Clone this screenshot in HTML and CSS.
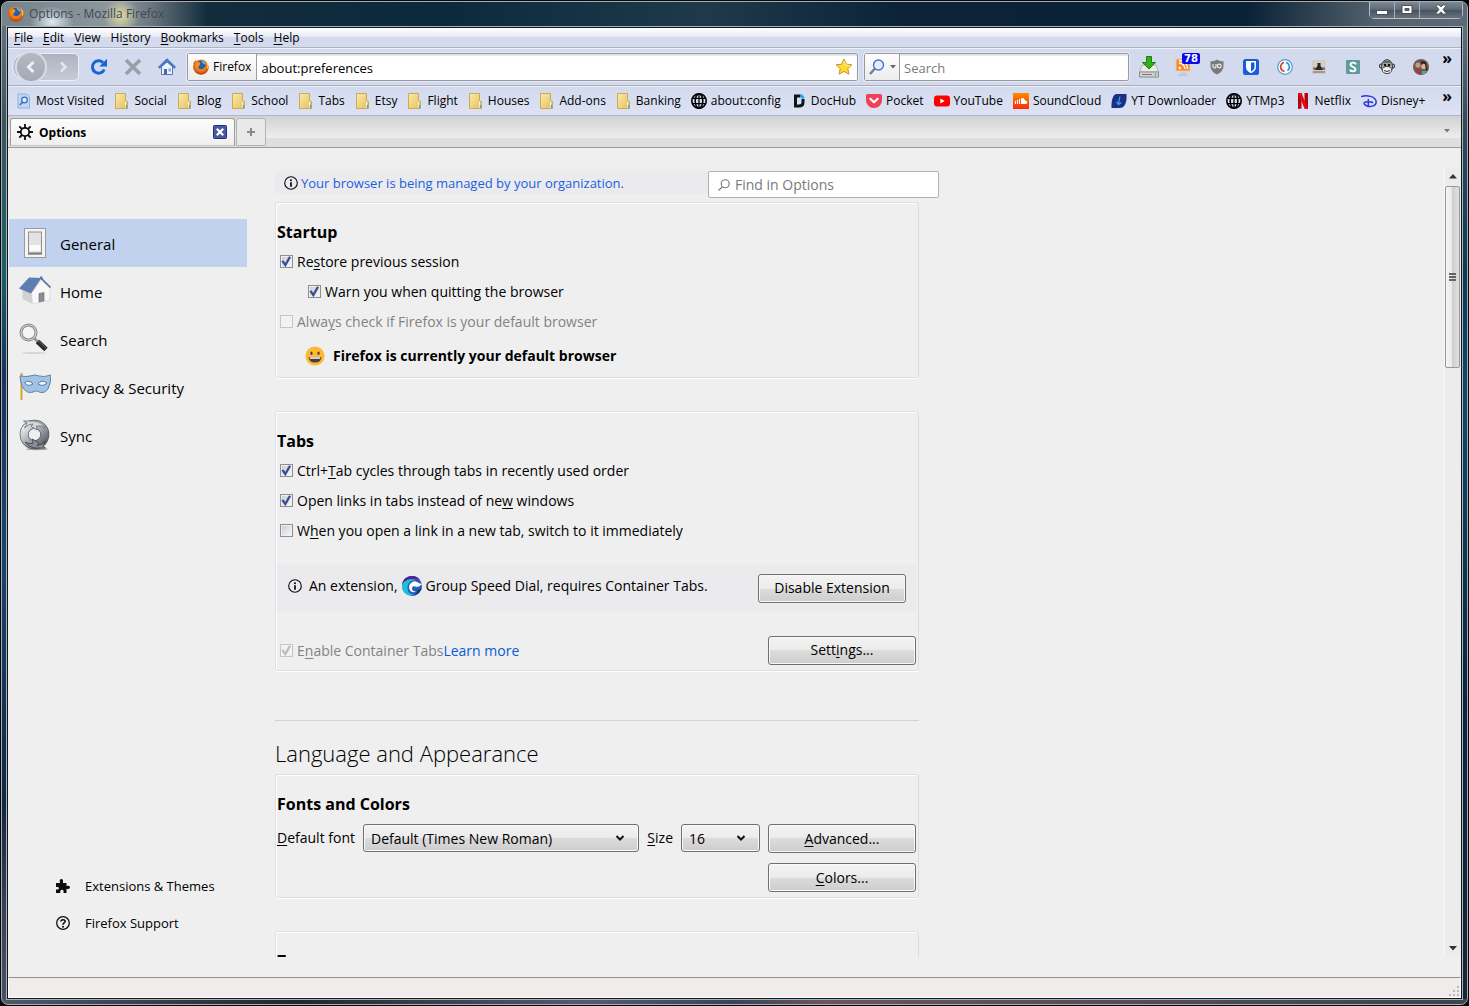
FILE: index.html
```html
<!DOCTYPE html>
<html lang="en">
<head>
<meta charset="utf-8">
<title>Options - Mozilla Firefox</title>
<link rel="stylesheet" href="styles.css">
</head>
<body>
<svg class="defs" aria-hidden="true">
  <defs>
    <linearGradient id="gold" x1="0" y1="0" x2="1" y2="1"><stop offset="0" stop-color="#fdeaa4"/><stop offset="1" stop-color="#e3bf62"/></linearGradient>
    <linearGradient id="steel" x1="0" y1="0" x2="1" y2="1"><stop offset="0" stop-color="#f2f4f5"/><stop offset=".5" stop-color="#a4aaaf"/><stop offset="1" stop-color="#565c61"/></linearGradient>
    <linearGradient id="sound" x1="0" y1="0" x2="0" y2="1"><stop offset="0" stop-color="#ff8a00"/><stop offset="1" stop-color="#fb2a05"/></linearGradient>
    <radialGradient id="fox" cx=".5" cy=".35" r=".65"><stop offset="0" stop-color="#ffb52e"/><stop offset=".6" stop-color="#ee7a16"/><stop offset="1" stop-color="#b93c0c"/></radialGradient>
    <symbol id="firefox" viewBox="0 0 16 16">
      <circle cx="8" cy="8" r="7.6" fill="url(#fox)"/>
      <circle cx="8" cy="6.8" r="5.3" fill="#2b5ca8"/>
      <path d="M8 1.600c2.600.3 4.600 2 5.200 4.200L10.500 5z" fill="#69b4e8"/>
      <path d="M.5 3.500C1.500 2.800 2 2 2.300 1c.6 1.200 1.500 1.800 3 2 1 .1 1.800.9 2.200 1.900L6.200 6c.2 1.200-.3 1.700-1.200 2 .6 2.300 3 2.700 5 1.700 2-1 3.300-3 2.700-6.200C15 5.200 16 8 15.200 10.600 14 14 11 15.800 7.500 15.600 3.500 15.300.3 12 .3 8z" fill="url(#fox)"/>
      <path d="M13.500 3.500c1.500 1.800 1.700 4 .8 6" stroke="#ffdc4a" stroke-width="1" fill="none"/>
    </symbol>
    <symbol id="folder" viewBox="0 0 16 16">
      <path d="M1.500.5h10v7.500l2 .5v7H1.500z" fill="url(#gold)" stroke="#c79c3f" stroke-width=".8"/>
      <path d="M11.500 8.500v6.500" stroke="#fff3bf"/><path d="M12.500 12v3" stroke="#39a8dc" stroke-width="1.300"/>
    </symbol>
    <symbol id="globe" viewBox="0 0 16 16">
      <g fill="none" stroke="#000" stroke-width="1.600"><circle cx="8" cy="8" r="7.200"/><ellipse cx="8" cy="8" rx="3.800" ry="7.200"/><path d="M1.500 5.300h13M1.500 10.700h13M8 1v14" stroke-width="1.300"/></g>
    </symbol>
    <symbol id="info" viewBox="0 0 16 16">
      <circle cx="8" cy="8" r="7.200" fill="none" stroke="#0c0c0d" stroke-width="1.300"/><circle cx="8" cy="4.800" r="1.200" fill="#0c0c0d"/><path d="M8 7v5.300" stroke="#0c0c0d" stroke-width="2"/>
    </symbol>
    <symbol id="chevron" viewBox="0 0 10 8"><path d="M1.500 2l3.500 3.500L8.500 2" fill="none" stroke="#111" stroke-width="2"/></symbol>
  </defs>
</svg>

<div class="window">
  <header class="titlebar">
    <svg class="i16"><use href="#firefox"/></svg>
    <span class="caption">Options - Mozilla Firefox</span>
    <div class="winctl">
      <button aria-label="Minimize"><svg width="12" height="12"><rect x=".5" y="6.500" width="11" height="4" fill="#fff" stroke="#4a5058"/></svg></button>
      <button aria-label="Maximize"><svg width="12" height="12"><path d="M1 1.500h10v8H1zM4 4.500v2h4v-2z" fill="#fff" fill-rule="evenodd" stroke="#4a5058"/></svg></button>
      <button class="close" aria-label="Close"><svg width="12" height="12"><path d="M.5 1h3.500l2 2 2-2h3.500L8 5.500l3.500 4.500H8L6 7.800 4 10H.5L4 5.500z" fill="#fff" stroke="#4a5058" stroke-width=".8"/></svg></button>
    </div>
  </header>

  <div class="client">
    <nav class="menubar">
      <a href="#"><u>F</u>ile</a><a href="#"><u>E</u>dit</a><a href="#"><u>V</u>iew</a><a href="#">Hi<u>s</u>tory</a><a href="#"><u>B</u>ookmarks</a><a href="#"><u>T</u>ools</a><a href="#"><u>H</u>elp</a>
    </nav>

    <div class="navbar">
      <div class="backfwd">
        <button class="back" aria-label="Back"><svg width="16" height="16"><path d="M10.500 3L5.500 8l5 5" fill="none" stroke="#eef0f5" stroke-width="3"/></svg></button>
        <button class="fwd" aria-label="Forward"><svg width="14" height="14"><path d="M5 2.500L9.500 7 5 11.500" fill="none" stroke="#e4e6ec" stroke-width="2.500"/></svg></button>
      </div>
      <button class="tool" aria-label="Reload"><svg width="18" height="18"><path d="M14.300 11.500A6.200 6.200 0 1 1 13 4.600" fill="none" stroke="#1766d8" stroke-width="3"/><path d="M17 .8v7.700H9.300z" fill="#1766d8"/></svg></button>
      <button class="tool" aria-label="Stop"><svg width="18" height="18"><path d="M2 2l14 14M16 2L2 16" stroke="#9a9ea8" stroke-width="3.600"/></svg></button>
      <button class="tool" aria-label="Home"><svg width="18" height="18"><path d="M3.500 8.500L9 4l5.500 4.500v8h-11z" fill="#eef3fb" stroke="#5377bd"/><path d="M.8 9.800L9 2l8.200 7.800" fill="none" stroke="#4a74c6" stroke-width="2.400"/><rect x="6" y="11" width="3" height="5.500" fill="#4868a8"/><rect x="10.500" y="10.500" width="2.500" height="3" fill="#7fa8df"/></svg></button>
      <div class="urlbar">
        <button class="identity"><svg class="i16"><use href="#firefox"/></svg>Firefox</button>
        <input type="text" aria-label="Address" value="about:preferences">
        <button class="star" aria-label="Bookmark this page"><svg width="18" height="18"><path d="M9 1.200l2.400 5 5.400.6-4 3.800 1.100 5.500L9 13.400l-4.900 2.700 1.100-5.500-4-3.800 5.400-.6z" fill="#ffd93b" stroke="#d0920f"/><path d="M9 3l1.600 4 4.200.5" fill="none" stroke="#fff4a8"/></svg></button>
      </div>
      <div class="searchbar">
        <button class="engine" aria-label="Search engine"><svg width="18" height="18"><path d="M2 16l5-5.500" stroke="#7c7f86" stroke-width="2.600"/><circle cx="10.500" cy="7" r="5" fill="#e4effc" stroke="#4a6fd0" stroke-width="1.400"/></svg><svg width="6" height="4"><path d="M0 0h6L3 3.500z" fill="#666"/></svg></button>
        <input type="text" aria-label="Search" placeholder="Search">
      </div>
      <div class="addons">
        <button aria-label="Downloads"><svg width="20" height="22"><path d="M3 9h14l2.500 7H.5z" fill="#e9e9e9" stroke="#b5b5b5"/><path d="M.5 16h19v5H.5z" fill="#d4d4d4" stroke="#8a8a8a"/><path d="M3 18.500h10" stroke="#777"/><circle cx="16.500" cy="18.500" r="1" fill="#4b4"/><path d="M7.500.5h5v6h4L10 13 3.500 6.500h4z" fill="#2fb11a" stroke="#1b7f0d"/></svg></button>
        <button class="feed" aria-label="Feeds"><svg width="18" height="18"><rect x="2" y="1" width="14" height="12" fill="#f68b2c" stroke="#e9c9a8"/><path d="M5 5a6 6 0 0 1 6 6M5 2.500a8 8 0 0 1 8.500 8.500" fill="none" stroke="#fff" stroke-width="1.400"/><circle cx="5.800" cy="10" r="1.200" fill="#fff"/><path d="M6 15.500h6M4 17.500h10" stroke="#bcc3cc" stroke-width="1.500"/></svg><span class="badge">78</span></button>
        <button aria-label="uBlock"><svg width="16" height="16"><path d="M8 .5c2.500 1.500 4.500 1.800 6.500 1.800v4.200c0 4.500-2.500 7-6.500 9-4-2-6.500-4.500-6.500-9V2.300C3.500 2.300 5.500 2 8 .5z" fill="#7b7b7b"/><path d="M4 5v2.500a1.500 1.500 0 0 0 3 0V5" fill="none" stroke="#eee" stroke-width="1.200"/><circle cx="10.300" cy="7" r="1.800" fill="none" stroke="#eee" stroke-width="1.200"/></svg></button>
        <button aria-label="Bitwarden"><svg width="16" height="16"><rect width="16" height="16" rx="2.500" fill="#175ddc"/><path d="M3 2h10v6c0 3-2 4.800-5 6.300C5 12.800 3 11 3 8z" fill="#fff"/><path d="M8 3.500h3.500V8c0 2-1.500 3.500-3.500 4.500z" fill="#175ddc"/></svg></button>
        <button aria-label="Sync circle"><svg width="16" height="16"><circle cx="8" cy="8" r="7.300" fill="#f3f9fc" stroke="#4aa0cf" stroke-width="1.200"/><path d="M9 3.600a4.500 4.500 0 0 1 1.500 8" fill="none" stroke="#3a93cc" stroke-width="1.600"/><path d="M7 3.600a4.500 4.500 0 0 0-1.500 8l2 .8" fill="none" stroke="#dc4032" stroke-width="1.600"/></svg></button>
        <button aria-label="Camera"><svg width="14" height="14"><rect width="14" height="14" rx="1" fill="#d3cdc5"/><path d="M5.500 3h3v3l3 4H2.500l3-4z" fill="#2a2724"/><path d="M1 8.500h3M10 8.500h3" stroke="#6a635b" stroke-width="2"/><path d="M1 12h12" stroke="#a0988e" stroke-width="2"/></svg></button>
        <button aria-label="Stylus"><svg width="14" height="14"><rect width="14" height="14" rx="1" fill="#5f9b9b"/><path d="M10 4.300C9 2 4.500 2 4.500 4.800 4.500 7 9.500 6.600 9.500 9.200 9.500 12 4.500 11.800 4 9.500" fill="none" stroke="#fff" stroke-width="1.900"/></svg></button>
        <button aria-label="Greasemonkey"><svg width="16" height="16"><circle cx="2.200" cy="7" r="2" fill="#bbb" stroke="#333"/><circle cx="13.800" cy="7" r="2" fill="#bbb" stroke="#333"/><ellipse cx="8" cy="7.500" rx="5.500" ry="6.800" fill="#aaa" stroke="#333"/><ellipse cx="8" cy="11" rx="4.800" ry="3.600" fill="#eee" stroke="#444"/><circle cx="6" cy="6" r="1.300" fill="#111"/><circle cx="10" cy="6" r="1.300" fill="#111"/><path d="M5 11.500q3 2 6 0" fill="none" stroke="#333"/><path d="M4.500 3h7" stroke="#555" stroke-width="1.500"/></svg></button>
        <button aria-label="Profile"><svg width="16" height="16"><circle cx="8" cy="8" r="8" fill="#6d5a50"/><circle cx="5" cy="6" r="2.600" fill="#c99a86"/><circle cx="10.800" cy="7.500" r="2.600" fill="#e0b09c"/><path d="M8 3q3-2 5 1l1.500 7H13l-1-6-2-1-2 2z" fill="#2a1c1a"/><path d="M2.500 12q3-4 5-1l1 4.800q-4 0-6-3.800z" fill="#a33d42"/><path d="M9 12h4.500l-1 2.500L9 15.800z" fill="#48a6a4"/></svg></button>
      </div>
      <button class="more" aria-label="More tools">»</button>
    </div>

    <div class="bookmarks">
      <a href="#"><svg class="i16"><path d="M2 1h8.500l3 3v11H2z" fill="#bcd8f4" stroke="#8db3dc"/><circle cx="8.500" cy="7" r="2.800" fill="#dcecfb" stroke="#3e6fb6" stroke-width="1.300"/><path d="M6.500 9.200L3.800 12" stroke="#3e6fb6" stroke-width="1.600"/></svg>Most Visited</a>
      <a href="#"><svg class="i16"><use href="#folder"/></svg>Social</a>
      <a href="#"><svg class="i16"><use href="#folder"/></svg>Blog</a>
      <a href="#"><svg class="i16"><use href="#folder"/></svg>School</a>
      <a href="#"><svg class="i16"><use href="#folder"/></svg>Tabs</a>
      <a href="#"><svg class="i16"><use href="#folder"/></svg>Etsy</a>
      <a href="#"><svg class="i16"><use href="#folder"/></svg>Flight</a>
      <a href="#"><svg class="i16"><use href="#folder"/></svg>Houses</a>
      <a href="#"><svg class="i16"><use href="#folder"/></svg>Add-ons</a>
      <a href="#"><svg class="i16"><use href="#folder"/></svg>Banking</a>
      <a href="#"><svg class="i16"><use href="#globe"/></svg>about:config</a>
      <a href="#"><svg class="i16"><path d="M9 3H4.500v10H8c2.800 0 4-1.600 4-3.500V6" fill="none" stroke="#10151c" stroke-width="3"/><path d="M9 1q4 .5 4.500 4.500H10.500L9 4z" fill="#23a0e8"/></svg>DocHub</a>
      <a href="#"><svg class="i16"><path d="M1.800 1h12.400Q16 1 16 2.800V7c0 4.500-3.600 8-8 8S0 11.500 0 7V2.800Q0 1 1.800 1z" fill="#ef4056"/><path d="M4.300 5.800L8 9.300l3.700-3.500" fill="none" stroke="#fff" stroke-width="2.200" stroke-linecap="round" stroke-linejoin="round"/></svg>Pocket</a>
      <a href="#"><svg class="i16"><rect y="2.500" width="16" height="11" rx="3" fill="#f00"/><path d="M6.300 5.500v5l4.400-2.500z" fill="#fff"/></svg>YouTube</a>
      <a href="#"><svg class="i16"><rect width="16" height="16" fill="url(#sound)"/><path d="M2.500 8v3M4.500 7v4M6.500 6v5" stroke="#fff" stroke-width="1.100"/><path d="M8 5.300q3-1 4 2.200 2.300-.2 2.300 1.800T12.500 11H8z" fill="#fff"/></svg>SoundCloud</a>
      <a href="#"><svg class="i16"><path d="M5 1h10.500q.5 8-2 11.500Q12 15 8.500 15H.5q-.3-7 1.500-11Q3 1.500 5 1z" fill="#1c2f86"/><path d="M8.800 3.500L7.500 11M5.500 8.800l2 2.700 2.800-2" fill="none" stroke="#35a2e8" stroke-width="1.300"/></svg>YT Downloader</a>
      <a href="#"><svg class="i16"><use href="#globe"/></svg>YTMp3</a>
      <a href="#"><svg class="i16"><path d="M3 0h3.500v15.500L3 16zM9.500 0H13v16l-3.500-.5z" fill="#b1060f"/><path d="M3 0h3.500L13 16l-3.500-.5z" fill="#e50914"/></svg>Netflix</a>
      <a href="#"><svg class="i16"><path d="M.8 3.500C5 1.800 15 3 15.200 9c.1 4.500-6.500 5.200-9.200 4-2.500-1-4-2.800-2-3.800 2-.8 6-.6 7.500.3M7.300 6.500v7" fill="none" stroke="#2b35e0" stroke-width="1.500" stroke-linecap="round"/></svg>Disney+</a>
      <button class="more" aria-label="More bookmarks">»</button>
    </div>

    <div class="tabstrip">
      <div class="tab">
        <svg class="i16"><circle cx="8" cy="8" r="4.200" fill="none" stroke="#0c0c0d" stroke-width="1.800"/><path d="M8 0v4M8 12v4M0 8h4M12 8h4M2.300 2.300L5 5M11 11l2.700 2.700M2.300 13.700L5 11M11 5l2.700-2.700" stroke="#0c0c0d" stroke-width="1.800"/></svg>
        <span>Options</span>
        <button aria-label="Close tab"><svg width="14" height="14"><rect x=".5" y=".5" width="13" height="13" rx="1" fill="#4658a8" stroke="#242f70"/><path d="M3.800 3.800l6.400 6.400M10.200 3.800l-6.400 6.400" stroke="#fff" stroke-width="2.200"/></svg></button>
      </div>
      <button class="newtab" aria-label="New tab"><svg width="10" height="10"><path d="M5 1v8M1 5h8" stroke="#8a8a8a" stroke-width="2"/></svg></button>
      <button class="alltabs" aria-label="List all tabs"><svg width="6" height="4"><path d="M0 0h6L3 3.500z" fill="#777"/></svg></button>
    </div>

    <main class="page">
      <aside class="sidebar">
        <nav class="categories">
          <a class="selected" href="#"><svg width="32" height="32"><rect x="5.500" y="1.500" width="21" height="29" fill="#f4f4f4" stroke="#9a9a9a"/><rect x="9.500" y="5" width="13" height="22" fill="#e3e3e3" stroke="#8f8f8f"/><rect x="10.500" y="18" width="11" height="6" fill="#fbfbfb"/><path d="M9 26.500h14" stroke="#7e7e7e" stroke-width="2"/></svg><span>General</span></a>
          <a href="#"><svg width="32" height="32"><path d="M3.500 14l10 4v11L3.500 24z" fill="#cfd1d3"/><path d="M12.500 18l10-12.500 8.500 8V25l-17.500 4z" fill="#f8f8f8" stroke="#d4d4d4" stroke-width=".7"/><path d="M20 18.500l5-1v8.500l-5 1z" fill="#8b8d8f" stroke="#6a6a6a" stroke-width=".6"/><path d="M10 2.500L22.500 3 12 18.500 0 13.500z" fill="#5e7db1"/><path d="M21 3V1.500h2.500v4" fill="#5e7db1"/><path d="M22 3L31.500 12.500" stroke="#4a689c" stroke-width="1.500"/></svg><span>Home</span></a>
          <a href="#"><svg width="32" height="32"><ellipse cx="15" cy="30" rx="12" ry="1" fill="#d5d5d5"/><path d="M15 15l4 4" stroke="#999" stroke-width="3"/><path d="M18.500 18.500l8.500 8" stroke="#2b2b2b" stroke-width="5"/><path d="M19 17.500l8.500 8" stroke="#666" stroke-width="1"/><circle cx="9.500" cy="9.500" r="7.500" fill="#f4f5f5" stroke="#858585" stroke-width="3"/><circle cx="9.500" cy="9.500" r="7.500" fill="none" stroke="#d0d0d0" stroke-width="1.200"/></svg><span>Search</span></a>
          <a href="#"><svg width="32" height="32"><path d="M2.500 2v27" stroke="#d3a42e" stroke-width="2"/><path d="M1 5q7 1 10 0 5-2 9 0 5 1.500 12-1 0 8-3 14-3 4.500-7.500 3.500-3.500-2-5-1.500-4 2.500-8 1Q2 18 1 5z" fill="#9fc3e6" stroke="#64809c"/><path d="M5.500 12q4-4 8.500.8-4.500 3.500-8.500-.8zM19 12.800q4-4.800 9-.8-4 4.300-9 .8z" fill="#f5f8fb" stroke="#5a7896"/></svg><span>Privacy &amp; Security</span></a>
          <a href="#"><svg width="32" height="32"><ellipse cx="18" cy="30" rx="11" ry="1.200" fill="#9a9a9a"/><circle cx="15.500" cy="15.500" r="10.300" fill="none" stroke="#51575c" stroke-width="9"/><circle cx="15.500" cy="15.500" r="10.300" fill="none" stroke="url(#steel)" stroke-width="7.600"/><path d="M4.500 2H15q8 1 11 7-4-3-8.500-2l.5 4-6-3.500L14 5q-5 0-8.500 4L8 4z" fill="#d2d7da" stroke="#666c71" stroke-width=".8"/><path d="M26.500 29H16q-7-1-10-6 4 2.500 8 1.500l-.5-4.500 6.500 4-2 2.500q5 0 8.500-4.500L24 27z" fill="#8a9095" stroke="#3b4045" stroke-width=".8"/></svg><span>Sync</span></a>
        </nav>
        <nav class="footlinks">
          <a href="#"><svg width="14" height="14"><path d="M0 4h4Q3 0 5.300 0T7 4h3.500v3q3.500-1 3.500 1.300t-3.500 1.500V14H7.500q.5-3.300-1.500-3.300T4.300 14H0v-3.500q3 .4 3-1.300T0 8z" fill="#0c0c0d"/></svg>Extensions &amp; Themes</a>
          <a href="#"><svg width="14" height="14"><circle cx="7" cy="7" r="6.300" fill="none" stroke="#0c0c0d" stroke-width="1.300"/><path d="M4.900 5.500C5 3 9.200 3.200 9.100 5.500 9 7 7 7 7 8.700" fill="none" stroke="#0c0c0d" stroke-width="1.600"/><circle cx="7" cy="10.700" r="1" fill="#0c0c0d"/></svg>Firefox Support</a>
        </nav>
      </aside>

      <div class="scroller">
        <div class="pane">
          <div class="pane-head">
            <a class="policy" href="#"><svg class="i14"><use href="#info"/></svg>Your browser is being managed by your organization.</a>
            <label class="find"><svg width="12" height="12"><circle cx="7.200" cy="4.800" r="4" fill="none" stroke="#737373" stroke-width="1.100"/><path d="M4.200 7.800L.5 11.500" stroke="#737373" stroke-width="1.100"/></svg><input type="text" aria-label="Find in Options" placeholder="Find in Options"></label>
          </div>

          <section class="group">
            <h3>Startup</h3>
            <label class="check"><input type="checkbox" checked><span>Re<u>s</u>tore previous session</span></label>
            <label class="check nested"><input type="checkbox" checked><span>Warn you when quitting the browser</span></label>
            <label class="check"><input type="checkbox" disabled><span>Alwa<u>y</u>s check if Firefox is your default browser</span></label>
            <p class="default"><svg width="20" height="20"><circle cx="10" cy="10" r="9.500" fill="#fdb92f"/><path d="M3.500 11h13q-.5 5.500-6.500 5.500T3.500 11z" fill="#4b3a52"/><path d="M4.500 11.300h11l-.5 1.500H5z" fill="#fff"/><ellipse cx="6.500" cy="7.200" rx="1.100" ry="1.800" fill="#4b3a52"/><ellipse cx="13.500" cy="7.200" rx="1.100" ry="1.800" fill="#4b3a52"/></svg>Firefox is currently your default browser</p>
          </section>

          <section class="group">
            <h3>Tabs</h3>
            <label class="check"><input type="checkbox" checked><span>Ctrl+<u>T</u>ab cycles through tabs in recently used order</span></label>
            <label class="check"><input type="checkbox" checked><span>Open links in tabs instead of ne<u>w</u> windows</span></label>
            <label class="check"><input type="checkbox"><span>W<u>h</u>en you open a link in a new tab, switch to it immediately</span></label>
            <div class="notice">
              <svg class="i14"><use href="#info"/></svg>
              <p>An extension, <svg width="20" height="20"><circle cx="10" cy="10" r="10" fill="#2460c0"/><path d="M0 9A10 10 0 0 1 18 4Q9 1 6 7z" fill="#5a1f9c"/><path d="M2 6Q7 1.500 14 4 6 4 5.500 11T12 18.500Q5 21 1.500 15T2 6z" fill="#1cbfd8"/><path d="M20 8q-3 4-7 2.500-3-1-3 2t4 3q-5 2-6.500-2T9 7q3-3 6-1t5 2z" fill="#fff"/><path d="M20 10q-1 8-9 10 5-3 4-6 4 0 5-4z" fill="#16316e"/></svg> Group Speed Dial, requires Container Tabs.</p>
              <button class="btn">Disable Extension</button>
            </div>
            <div class="row">
              <label class="check"><input type="checkbox" checked disabled><span>E<u>n</u>able Container Tabs</span></label><a href="#">Learn more</a>
              <button class="btn push">Sett<u>i</u>ngs...</button>
            </div>
          </section>

          <hr>
          <h2>Language and Appearance</h2>

          <section class="group">
            <h3>Fonts and Colors</h3>
            <div class="fonts">
              <label for="font"><u>D</u>efault font</label>
              <div class="select wide"><select id="font"><option>Default (Times New Roman)</option></select><svg width="10" height="8"><use href="#chevron"/></svg></div>
              <label for="size"><u>S</u>ize</label>
              <div class="select"><select id="size"><option>16</option></select><svg width="10" height="8"><use href="#chevron"/></svg></div>
              <div class="stack"><button class="btn"><u>A</u>dvanced...</button><button class="btn"><u>C</u>olors...</button></div>
            </div>
          </section>

          <section class="group">
            <h3>Zoom</h3>
          </section>
        </div>
        <div class="scrollbar" aria-hidden="true">
          <svg width="8" height="5"><path d="M4 0l4 4.500H0z" fill="#333"/></svg>
          <div class="thumb"><i></i><i></i><i></i></div>
          <svg width="8" height="5"><path d="M0 0h8L4 4.500z" fill="#333"/></svg>
        </div>
      </div>
    </main>
    <footer class="status"><svg width="12" height="12"><path d="M9 1h2v2H9zM9 5h2v2H9zM9 9h2v2H9zM5 5h2v2H5zM5 9h2v2H5zM1 9h2v2H1z" fill="#bdb9b8"/></svg></footer>
  </div>
</div>
</body>
</html>
```

FILE: styles.css
```css
* { box-sizing: border-box; }
body {
  margin: 0;
  height: 100vh;
  padding: 1px;
  background: #05070a;
  color: #000;
  font: 12px/16px "Open Sans", "Noto Sans", sans-serif;
}
.defs { position: absolute; width: 0; height: 0; }
svg { flex: none; display: block; }
a { color: inherit; text-decoration: none; }
u { text-underline-offset: 2px; text-decoration-thickness: 1px; }
button, input, select { font: inherit; color: inherit; margin: 0; }
button { border: 0; padding: 0; background: none; }
h2, h3, p { margin: 0; }
.i16 { width: 16px; height: 16px; }
.i14 { width: 14px; height: 14px; }

/* Glass frame */
.window {
  height: 100%;
  display: flex;
  flex-direction: column;
  padding: 0 4px 4px;
  border: 1px solid #a3afb5;
  border-radius: 7px;
  overflow: hidden;
  background:
    linear-gradient(90deg, #50586a 0, #23262f 20%, #565b6e 40%, #3c4356 50%, #6a555d 56%, #5c4f58 70%, #3d4350 100%) bottom / 100% 5px no-repeat,
    linear-gradient(180deg, #6c7b84 0, #3b5560 12%, #1b5f66 27%, #17345e 37%, #1c4470 55%, #122743 80%, #3e4458 92%, #4a5066 100%) left / 50% 100% no-repeat,
    linear-gradient(180deg, #6c7b84 0, #33495a 12%, #0b3a56 27%, #0c4a66 40%, #0a2440 70%, #1b2636 100%) right / 50% 100% no-repeat;
}
.titlebar {
  height: 24px;
  flex: none;
  display: flex;
  align-items: center;
  gap: 5px;
  margin: 0 -4px;
  padding-left: 6px;
  background:
    radial-gradient(ellipse 22px 16px at 50px 20px, #dfe9f2 0, #dfe9f200 100%),
    radial-gradient(ellipse 18px 18px at 119px 14px, #dcd9a0 0, #dcd9a000 100%),
    linear-gradient(90deg, #75838c 0, #8d989f 8%, #6d7a82 10%, #122c3c 14%, #0a2a3c 30%, #1e3a4a 48%, #0b2238 62%, #0a2236 85%, #54626e 94%, #5c6a76 100%);
}
.caption { flex: 1; color: #41484e; }
.winctl {
  display: flex;
  align-self: flex-start;
  margin-right: 4px;
  border: 1px solid #b4bcc3;
  border-top: 0;
  border-radius: 0 0 5px 5px;
}
.winctl button { width: 25px; height: 16px; display: grid; place-items: center; border-right: 1px solid #a5aeb6; background: linear-gradient(#7d8993, #5b6772 50%, #46525e 50%, #66727d); }
.winctl .close { width: 42px; border: 0; }

.client {
  flex: 1;
  min-height: 0;
  display: flex;
  flex-direction: column;
  outline: 1px solid #a9b4ba;
  border: 1px solid #10161c;
  margin: 1px;
  background: #efefef;
}
.menubar {
  height: 20px;
  flex: none;
  display: flex;
  align-items: center;
  gap: 10px;
  padding: 0 6px;
  border-bottom: 1px solid #b1b4bf;
  background: linear-gradient(#fff, #e6eaf5 9px, #d3daed 9px);
}

/* Navigation toolbar */
.navbar {
  height: 38px;
  flex: none;
  display: flex;
  align-items: center;
  padding: 0 6px 0 4px;
  border-top: 1px solid #eef1f8;
  border-bottom: 1px solid #a9adba;
  background: #d3daed;
}
.backfwd { display: flex; align-items: center; width: 67px; height: 28px; padding-left: 2px; border: 1px solid #eceff6; border-radius: 14px 5px 5px 14px; background: linear-gradient(#aeb3bf, #c6cad5); }
.back { width: 32px; height: 32px; flex: none; display: grid; place-items: center; border: 2px solid #d9dce5; border-radius: 50%; background: linear-gradient(#b4b8c2, #a5a9b4); }
.fwd { flex: 1; display: grid; place-items: center; }
.tool { width: 34px; height: 28px; display: grid; place-items: center; }
.backfwd + .tool { margin-left: 3px; }
.urlbar, .searchbar { display: flex; height: 28px; border: 1px solid #9599a5; border-radius: 2px; background: #fff; outline: 1px solid #e6eaf4; box-shadow: inset 0 2px 1px #e4e4e4; }
.urlbar { flex: 1; margin-left: 3px; }
.searchbar { width: 265px; margin-left: 6px; }
.urlbar input, .searchbar input { flex: 1; min-width: 0; border: 0; padding: 2px 4px 0; background: none; outline: 0; font-size: 13px; }
.identity { display: flex; align-items: center; gap: 4px; padding: 0 5px; border-right: 1px solid #9c9c9c; background: linear-gradient(#fdfdfd, #ececec); }
.engine { display: flex; align-items: center; gap: 4px; padding: 0 3px; border-right: 1px solid #9c9c9c; background: linear-gradient(#fdfdfd, #ececec); }
.star { width: 26px; display: grid; place-items: center; }
::placeholder { color: #7a7a7a; opacity: 1; }
.addons { display: flex; align-items: center; margin-left: 3px; }
.addons button { width: 34px; height: 28px; display: grid; place-items: center; }
.feed { position: relative; }
.badge { position: absolute; left: 16px; top: 0; padding: 0 2px; border-radius: 2px; background: #0a0af0; color: #fff; font: bold 10px/11px "DejaVu Sans", sans-serif; }
.more { width: 17px; padding-right: 3px; margin-left: auto; align-self: flex-start; text-align: right; font: bold 16px/18px "Open Sans", sans-serif; }

.bookmarks {
  height: 30px;
  flex: none;
  display: flex;
  align-items: center;
  gap: 10px;
  padding: 0 6px 0 8px;
  border-top: 1px solid #eef1f8;
  border-bottom: 1px solid #aeb6c9;
  background: linear-gradient(#d3daed, #dde3f4);
  white-space: nowrap;
}
.bookmarks a { display: flex; align-items: center; gap: 4px; }

.tabstrip {
  height: 32px;
  flex: none;
  display: flex;
  align-items: flex-end;
  gap: 1px;
  padding: 0 11px 1px 2px;
  border-bottom: 1px solid #9b9b9b;
  background: linear-gradient(#d2d2d2, #ededed 70%, #dfdfdf 72%);
}
.tab { width: 225px; height: 28px; display: flex; align-items: center; gap: 6px; padding: 0 7px 0 6px; border: 1px solid #9d9d9d; border-bottom-color: #c8c8c8; border-radius: 3px 3px 0 0; background: linear-gradient(#fcfcfc, #efefef); font-weight: 700; }
.tab span { flex: 1; padding-top: 2px; }
.newtab { width: 30px; height: 28px; display: grid; place-items: center; border: 1px solid #b4b4b4; border-radius: 3px 3px 0 0; background: #e9e9e9; }
.alltabs { margin-left: auto; align-self: center; }

/* Options page */
.page { flex: 1; min-height: 0; display: flex; padding: 20px 0; font-size: 14px; line-height: 20px; }
.sidebar { width: 267px; flex: none; display: flex; flex-direction: column; justify-content: space-between; padding: 51px 28px 16px 1px; }
.categories a { height: 48px; display: flex; align-items: center; gap: 9px; padding-left: 10px; font-size: 15px; }
.categories span { padding-top: 2px; }
.categories .selected { background: #c1d2ee; }
.footlinks { padding-left: 47px; font-size: 13px; }
.footlinks a { height: 37px; display: flex; align-items: center; gap: 15px; }
.scroller { flex: 1; min-width: 0; display: flex; overflow: hidden; }
.pane { flex: 1; min-width: 0; height: 100%; overflow: hidden; padding-top: 3px; }
.pane-head { display: flex; max-width: 664px; margin-bottom: 4px; }
.policy { flex: 1; height: 23px; display: flex; align-items: center; gap: 3px; padding-left: 9px; background: #ebebee; color: #1a5fe0; font-size: 13px; white-space: nowrap; }
.find { width: 231px; height: 27px; display: flex; align-items: center; gap: 5px; padding: 0 9px; border: 1px solid #b1b1b3; border-radius: 2px; background: #fff; }
.find input { flex: 1; min-width: 0; border: 0; padding: 0; outline: 0; }

.group { max-width: 644px; margin-bottom: 33px; padding: 17px 2px 5px 1px; border: 1px solid #d5dfe8; border-radius: 3px; box-shadow: inset 1px 1px #fff, 0 1px #fff; }
.group h3 { height: 26px; font-size: 16px; line-height: 24px; }
.check { height: 30px; display: flex; align-items: center; gap: 4px; padding-left: 3px; }
.check span, .row a { padding-top: 2px; }
.nested { padding-left: 31px; }
.check input { appearance: none; width: 13px; height: 13px; flex: none; border: 1px solid #8e8f8f; background: linear-gradient(135deg, #c9ced6, #f8f8f8) content-box #f6f6f6; padding: 1px; }
.check input:checked { background: url("data:image/svg+xml,%3Csvg xmlns='http://www.w3.org/2000/svg' viewBox='0 0 11 11'%3E%3Cpath d='M2 5l2.500 3.500L8.500 1.500' fill='none' stroke='%233b4f92' stroke-width='2'/%3E%3C/svg%3E") border-box, linear-gradient(135deg, #c9ced6, #f8f8f8) content-box #f6f6f6; }
.check input:disabled { border-color: #c6c6c6; background: #f2f2f2; }
.check input:disabled:checked { background: url("data:image/svg+xml,%3Csvg xmlns='http://www.w3.org/2000/svg' viewBox='0 0 11 11'%3E%3Cpath d='M2 5l2.500 3.500L8.500 1.500' fill='none' stroke='%23bdbdbd' stroke-width='2'/%3E%3C/svg%3E") border-box #f2f2f2; }
.check input:disabled + span { color: #838383; }
.default { height: 36px; display: flex; align-items: center; gap: 8px; padding: 4px 0 0 28px; font-weight: 700; }
.notice { height: 48px; display: flex; align-items: center; gap: 7px; margin: 19px 0 23px; padding: 0 10px 0 11px; border-radius: 2px; background: #ebebee; }
.notice > svg, .notice p { margin-bottom: 4px; }
.notice p { flex: 1; display: flex; align-items: center; gap: 4px; white-space: nowrap; }
.row { display: flex; align-items: center; }
.row a { color: #0a5ad8; }
.push { margin-left: auto; }
.btn, .select select { height: 29px; border: 1px solid #707070; border-radius: 3px; background: linear-gradient(#f3f3f3, #ebebeb 50%, #dcdcdc 50%, #cdcdcd); box-shadow: inset 0 0 0 1px #f8f8f8; }
.btn { width: 148px; }
hr { max-width: 644px; margin: 49px auto 0 0; border: 0; border-top: 1px solid #d2d3d9; }
h2 { margin: 16px 0 5px; font-size: 22px; line-height: 32px; font-weight: 300; }
.fonts { display: flex; align-items: flex-start; gap: 8px; margin-top: 6px; line-height: 28px; }
.select { display: grid; align-items: center; width: 79px; }
.select.wide { flex: 1; width: auto; }
.select > * { grid-area: 1 / 1; }
.select svg { justify-self: end; margin-right: 14px; }
.select select { appearance: none; width: 100%; height: 28px; padding: 0 7px; }
.stack { display: grid; gap: 10px; }

.scrollbar { width: 17px; flex: none; display: flex; flex-direction: column; align-items: center; padding: 6px 1px 6px 0; border-left: 1px solid #f8f8f8; background: #ececec; }
.thumb { width: 15px; height: 182px; margin: 7px 0 auto; display: flex; flex-direction: column; justify-content: center; align-items: center; gap: 1px; border: 1px solid #989898; border-radius: 2px; background: linear-gradient(90deg, #f6f6f6, #e8e8e8 50%, #cfcfd2 50%, #e0e0e0); }
.thumb i { width: 7px; height: 2px; background: #666; }
.status { height: 21px; flex: none; display: flex; justify-content: flex-end; align-items: flex-end; border: 1px solid #fff; border-top-color: #8f8f8f; background: #f0eceb; }
```
